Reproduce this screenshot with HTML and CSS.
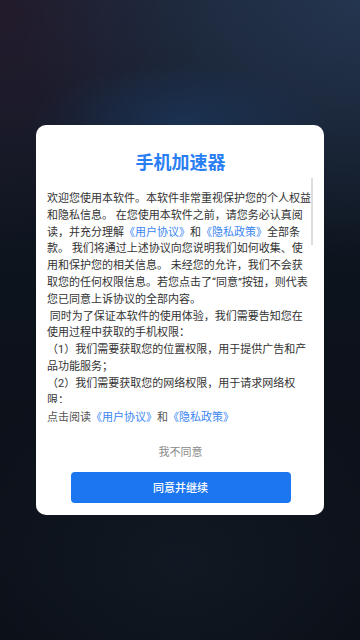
FILE: index.html
```html
<!DOCTYPE html>
<html lang="zh-CN">
<head>
<meta charset="utf-8">
<meta name="viewport" content="width=360, initial-scale=1">
<title>手机加速器</title>
<link rel="stylesheet" href="styles.css">
</head>
<body>
<div class="screen">
  <div class="card">
    <h1 class="title">手机加速器</h1>
    <div class="scroll-wrap">
      <div class="scroll">
        <p>欢迎您使用本软件。本软件非常重视保护您的个人权益和隐私信息。 在您使用本软件之前，请您务必认真阅读，并充分理解<a class="link">《用户协议》</a>和<a class="link">《隐私政策》</a>全部条款。 我们将通过上述协议向您说明我们如何收集、使用和保护您的相关信息。 未经您的允许，我们不会获取您的任何权限信息。若您点击了“同意”按钮，则代表您已同意上诉协议的全部内容。</p>
        <p>&nbsp;同时为了保证本软件的使用体验，我们需要告知您在使用过程中获取的手机权限：</p>
        <p>（1）我们需要获取您的位置权限，用于提供广告和产品功能服务；</p>
        <p>（2）我们需要获取您的网络权限，用于请求网络权限；</p>
        <p>（3）我们需要获取您的存储权限，用于缓存图片、视频等数据，减少流量消耗，提升加载速度；</p>
        <p>（4）我们需要获取您的设备信息权限，用于识别设备、保障账号安全以及统计分析；</p>
      </div>
      <span class="thumb" aria-hidden="true"></span>
    </div>
    <p class="agree-line">点击阅读<a class="link">《用户协议》</a>和<a class="link">《隐私政策》</a></p>
    <button class="btn-decline" type="button">我不同意</button>
    <button class="btn-accept" type="button">同意并继续</button>
  </div>
</div>
</body>
</html>
```

FILE: styles.css
```css
* {
  box-sizing: border-box;
}

html, body {
  margin: 0;
  padding: 0;
}

body {
  font-family: Roboto, "Noto Sans CJK SC", sans-serif;
  background: #0b1017;
}

.screen {
  width: 360px;
  height: 640px;
  display: flex;
  align-items: center;
  justify-content: center;
  overflow: hidden;
  background:
    radial-gradient(ellipse 42% 9% at 50% 19%, rgba(28, 68, 118, 0.45), rgba(28, 68, 118, 0) 100%),
    radial-gradient(ellipse 70% 30% at 50% 88%, rgba(22, 30, 42, 0.6), rgba(22, 30, 42, 0) 100%),
    radial-gradient(ellipse 95% 40% at 100% 0%, #24354f 0%, rgba(36, 53, 79, 0.6) 40%, rgba(36, 53, 79, 0) 100%),
    radial-gradient(ellipse 60% 35% at 0% 2%, #221b2c 0%, rgba(34, 27, 44, 0) 100%),
    linear-gradient(180deg, #19202f 0%, #121926 20%, #0d131c 45%, #0a0f16 100%);
}

.card {
  width: 288px;
  height: 390px;
  background: #ffffff;
  border-radius: 10px;
  padding: 25px 10px 12px 11px;
  display: flex;
  flex-direction: column;
  align-items: stretch;
}

.title {
  margin: 0;
  font-size: 18px;
  line-height: 26px;
  font-weight: 700;
  color: #2a7ef4;
  text-align: center;
}

.scroll-wrap {
  position: relative;
  margin-top: 2px;
  height: 225px;
  flex: none;
}

.scroll {
  width: 265px;
  height: 100%;
  overflow: hidden;
  padding-top: 13px;
  font-size: 11px;
  line-height: 16.8px;
  color: #333333;
}

.scroll p {
  margin: 0;
}

.thumb {
  position: absolute;
  top: 0;
  right: 1px;
  width: 2px;
  height: 67px;
  background: #dedede;
}

.link {
  color: #3b86f2;
  text-decoration: none;
}

.agree-line {
  margin: 7px 0 0;
  font-size: 11px;
  line-height: 16.8px;
  color: #555555;
}

.btn-decline {
  margin: 17px auto 0;
  padding: 0;
  border: none;
  background: none;
  font-family: inherit;
  font-size: 11px;
  line-height: 17px;
  color: #8a8a8a;
}

.btn-accept {
  margin: 11px auto 0;
  width: 220px;
  height: 31px;
  padding: 0;
  border: none;
  border-radius: 4px;
  background: #1c76ef;
  color: #ffffff;
  font-family: inherit;
  font-size: 11px;
  font-weight: 500;
}
```
